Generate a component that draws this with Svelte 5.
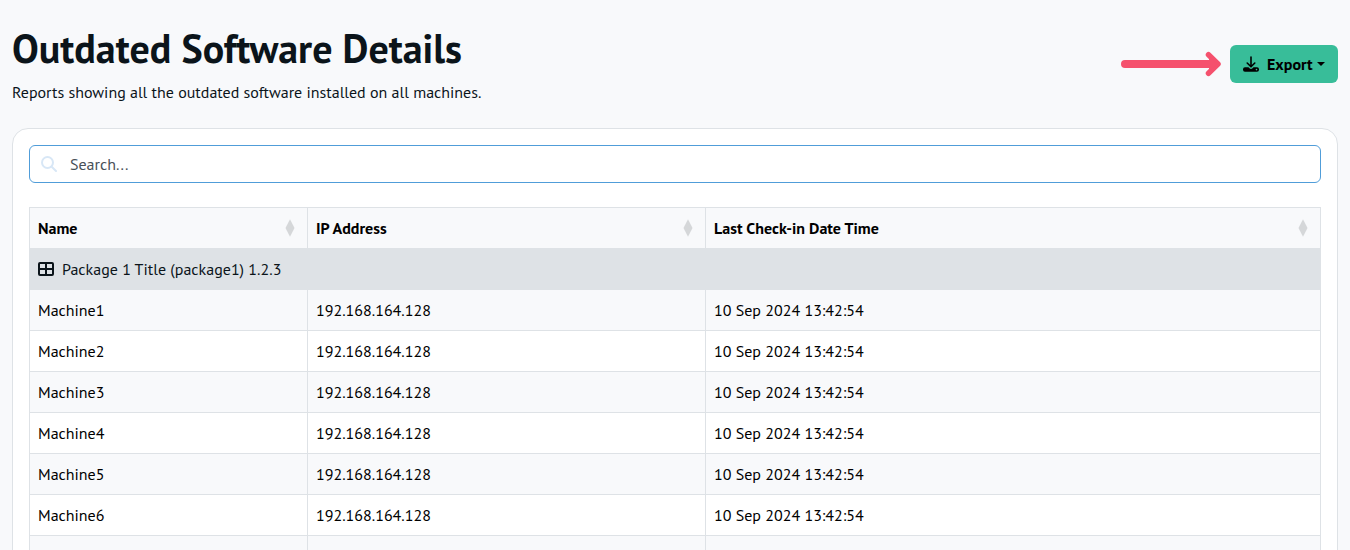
<script>
  const columns = [
    { label: 'Name', cls: 'name' },
    { label: 'IP Address', cls: 'ip' },
    { label: 'Last Check-in Date Time', cls: 'last' }
  ];
  const rows = Array.from({ length: 6 }, (_, i) => ({
    name: `Machine${i + 1}`,
    ip: '192.168.164.128',
    date: '10 Sep 2024 13:42:54'
  }));
</script>

<div class="page">
  <header>
    <div>
      <h1>Outdated Software Details</h1>
      <p>Reports showing all the outdated software installed on all machines.</p>
    </div>
    <div class="actions">
      <svg class="arrow" width="102" height="26" viewBox="0 0 102 26" fill="none" stroke="#f5516d" stroke-width="8" stroke-linecap="round" stroke-linejoin="round">
        <path d="M5 13H95" />
        <path d="M88.500 3.700L98 13l-9.500 9.300" stroke-width="5.500" />
        <path d="M89 5l8 8-8 8z" fill="#f5516d" stroke="none" />
      </svg>
      <button>
        <svg width="16" height="16" viewBox="0 0 16 16">
          <path d="M8 1v9.500M4.200 7L8 10.800 11.800 7" fill="none" stroke="#000" stroke-width="1.600" stroke-linecap="round" stroke-linejoin="round" />
          <path d="M2 11.300h3.500l1 1a2.100 2.100 0 0 0 3 0l1-1H14a2 2 0 0 1 2 2v.5a2 2 0 0 1-2 2H2a2 2 0 0 1-2-2v-.5a2 2 0 0 1 2-2z" />
          <circle cx="13.500" cy="13.600" r=".8" fill="#38bd99" />
        </svg>
        <span class="export">Export</span><i class="caret"></i>
      </button>
    </div>
  </header>

  <main>
    <label class="search">
      <svg width="16" height="16" viewBox="0 0 16 16" fill="none" stroke="#d8e7f6" stroke-width="2" stroke-linecap="round">
        <circle cx="6.500" cy="6.500" r="5.500" />
        <path d="M10.700 10.700L15 15" />
      </svg>
      <input placeholder="Search..." aria-label="Search" />
    </label>

    <table>
      <thead>
        <tr>
          {#each columns as col}
            <th class={col.cls}>
              <div class="head">
                <span>{col.label}</span>
                <svg width="10" height="18" viewBox="0 0 10 18"><path d="M5 .3L9.500 9 5 17.700.5 9z" fill="#d5d7d9" /></svg>
              </div>
            </th>
          {/each}
        </tr>
      </thead>
      <tbody>
        <tr class="group">
          <td colspan="3">
            <div class="group-title">
              <svg width="16" height="14" viewBox="0 0 16 14" fill="none" stroke="#0b141a" stroke-width="2">
                <rect x="1" y="1" width="14" height="12" rx="1" />
                <path d="M8 1v12M1 7h14" />
              </svg>
              <span>Package 1 Title (package1) 1.2.3</span>
            </div>
          </td>
        </tr>
        {#each rows as row}
          <tr>
            <td>{row.name}</td>
            <td>{row.ip}</td>
            <td>{row.date}</td>
          </tr>
        {/each}
        <tr><td></td><td></td><td></td></tr>
      </tbody>
    </table>
  </main>
</div>

<style>
  :global(body) { margin: 0; background: #f8f9fb; overflow: hidden; }
  .page {
    box-sizing: border-box;
    height: 550px;
    overflow: hidden;
    padding: 0 12px;
    font: 16px/24px "PT Sans", "Noto Sans", sans-serif;
    color: #0b141a;
    background: #f8f9fb;
  }
  header { display: flex; justify-content: space-between; height: 128px; }
  h1 { margin: 24px 0 0; font-size: 40px; line-height: 48px; font-weight: 700; white-space: nowrap; }
  p { margin: 8px 0 0; white-space: nowrap; }
  .actions { display: flex; align-items: center; gap: 8px; height: 38px; margin-top: 45px; }
  button {
    box-sizing: border-box; display: flex; align-items: center;
    width: 108px; height: 38px; padding: 0 0 0 13px;
    border: 0; border-radius: 6px; background: #38bd99; color: #000;
    font: inherit; font-weight: 700;
  }
  .export { margin-left: 8px; }
  .caret { margin-left: 4px; border: 4.5px solid transparent; border-top-color: #000; border-bottom: 0; }
  main {
    box-sizing: border-box; height: 600px; padding: 16px;
    border: 1px solid #dee2e6; border-radius: 16px; background: #fff;
  }
  .search {
    box-sizing: border-box; display: flex; align-items: center; gap: 13px;
    height: 38px; padding: 0 11px; border: 1px solid #509dd9; border-radius: 6px;
  }
  input { flex: 1; padding: 0; border: 0; outline: 0; background: transparent; font: inherit; }
  input::placeholder { color: #485058; opacity: 1; }
  table { width: 100%; margin-top: 24px; border-collapse: collapse; table-layout: fixed; color: #000; }
  th, td { height: 41px; box-sizing: border-box; padding: 0 8px; border: 1px solid #dee2e6; text-align: left; white-space: nowrap; }
  th { background: #f8f9fb; font-weight: 700; }
  .name { width: 278px; }
  .ip { width: 398px; }
  .head { display: flex; align-items: center; justify-content: space-between; padding-right: 4.5px; }
  tbody tr:nth-child(even) td { background: #f8f9fb; }
  .group td { background: #dee2e6; color: #0b141a; }
  .group-title { display: flex; align-items: center; gap: 8px; }
</style>
